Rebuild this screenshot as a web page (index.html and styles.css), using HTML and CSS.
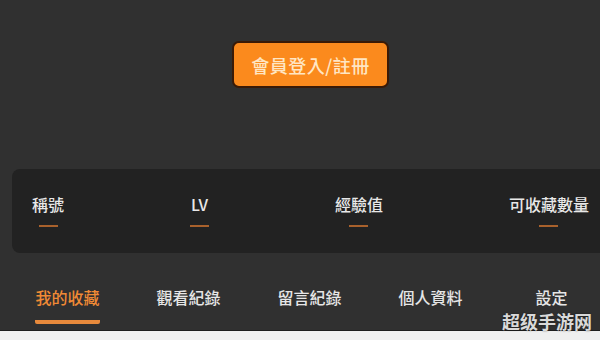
FILE: index.html
```html
<!DOCTYPE html>
<html lang="zh-Hant">
<head>
<meta charset="utf-8">
<link rel="stylesheet" href="styles.css">
</head>
<body>
<div class="page">
  <div class="hero">
    <button class="login">會員登入/註冊</button>
  </div>
  <div class="stats">
    <div class="stat"><span class="label">稱號</span><span class="dash"></span></div>
    <div class="stat"><span class="label">LV</span><span class="dash"></span></div>
    <div class="stat"><span class="label">經驗值</span><span class="dash"></span></div>
    <div class="stat"><span class="label">可收藏數量</span><span class="dash"></span></div>
  </div>
  <nav class="tabs">
    <div class="tab active"><span class="tab-text">我的收藏</span></div>
    <div class="tab"><span class="tab-text">觀看紀錄</span></div>
    <div class="tab"><span class="tab-text">留言紀錄</span></div>
    <div class="tab"><span class="tab-text">個人資料</span></div>
    <div class="tab"><span class="tab-text">設定</span></div>
  </nav>
  <div class="footer-strip"></div>
  <div class="watermark">超级手游网</div>
</div>
</body>
</html>
```
FILE: styles.css
```css
html, body {
  margin: 0;
  padding: 0;
  width: 600px;
  height: 340px;
  overflow: hidden;
  background: #303030;
  font-family: "Noto Sans CJK TC", "Noto Sans", sans-serif;
}
.page {
  position: relative;
  width: 600px;
  height: 340px;
  display: flex;
  flex-direction: column;
}
.hero {
  display: flex;
  justify-content: center;
  padding-top: 41px;
  height: 47px;
}
.login {
  box-sizing: border-box;
  width: 157px;
  height: 47px;
  margin-left: 21px;
  border: 2px solid #3a1a06;
  border-radius: 7px;
  background: #fb8a1d;
  color: #ffe6c4;
  font-family: "Noto Sans CJK TC", sans-serif;
  font-size: 18px;
  font-weight: 500;
  letter-spacing: 0.5px;
  padding: 0;
}
.stats {
  margin-top: 81px;
  margin-left: 12px;
  height: 84px;
  box-sizing: border-box;
  padding: 25px 11px 0 20px;
  background: #222222;
  border-radius: 8px 0 0 8px;
  display: flex;
  justify-content: space-between;
  align-items: flex-start;
}
.stat {
  display: flex;
  flex-direction: column;
  align-items: center;
}
.label {
  color: #e8e8e8;
  font-size: 16px;
  font-weight: 500;
  line-height: 20px;
}
.dash {
  width: 19px;
  height: 2px;
  margin-top: 11px;
  background: #a9612c;
}
.tabs {
  margin-top: 34px;
  padding-left: 7px;
  display: grid;
  grid-template-columns: repeat(5, 121px);
  height: 43px;
}
.tab {
  display: flex;
  flex-direction: column;
  align-items: center;
}
.tab-text {
  color: #e6e6e6;
  font-size: 16px;
  font-weight: 500;
  line-height: 20px;
  padding-bottom: 14px;
}
.tab.active .tab-text {
  color: #f08a35;
  border-bottom: 4px solid #e88a3c;
  border-radius: 0 0 2px 2px;
  padding-bottom: 13px;
}
.footer-strip {
  flex: 1;
  background: #efefef;
  border-top: 1px solid #1d1d1d;
}
.watermark {
  position: absolute;
  right: 8px;
  bottom: 8px;
  font-family: "Noto Sans CJK SC", sans-serif;
  font-weight: 700;
  font-size: 18px;
  line-height: 22px;
  color: #d9d9d9;
  text-shadow: 0 0 2px rgba(0,0,0,0.5);
}
```
